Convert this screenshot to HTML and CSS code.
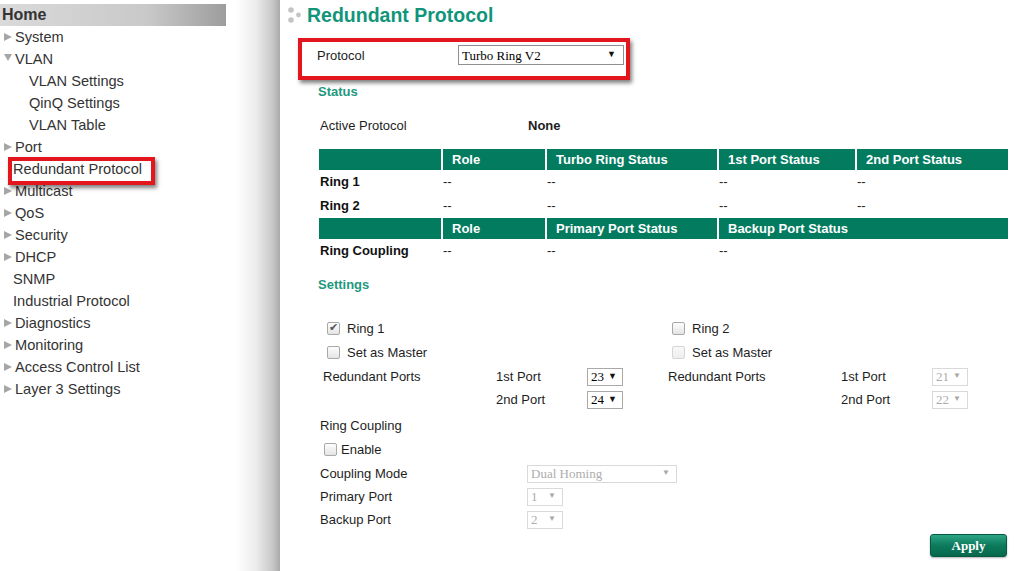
FILE: index.html
```html
<!doctype html>
<html>
<head>
	<meta charset="utf-8">
	<link rel="stylesheet" href="styles.css">
</head>
<body>

<div class="layout">
	<aside class="sidebar">
		<div class="home">Home</div>
		<ul class="menu">
			<li class="closed">System</li>
			<li class="open">VLAN</li>
			<li class="sub">VLAN Settings</li>
			<li class="sub">QinQ Settings</li>
			<li class="sub">VLAN Table</li>
			<li class="closed">Port</li>
			<li class="leaf marked">Redundant Protocol</li>
			<li class="closed">Multicast</li>
			<li class="closed">QoS</li>
			<li class="closed">Security</li>
			<li class="closed">DHCP</li>
			<li class="leaf">SNMP</li>
			<li class="leaf">Industrial Protocol</li>
			<li class="closed">Diagnostics</li>
			<li class="closed">Monitoring</li>
			<li class="closed">Access Control List</li>
			<li class="closed">Layer 3 Settings</li>
		</ul>
	</aside>

	<main class="content">
		<h1 class="page-title">
			<svg class="dots" width="14" height="16" viewBox="0 0 14 16">
				<circle cx="3" cy="3" r="2.8" fill="#c4c4c4"/>
				<circle cx="3" cy="13" r="2.8" fill="#c4c4c4"/>
				<circle cx="10.5" cy="8" r="2.4" fill="#c4c4c4"/>
			</svg>
			Redundant Protocol
		</h1>

		<div class="protocol-box">
			<label for="protocol">Protocol</label>
			<span class="select select-protocol">
				<select id="protocol"><option>Turbo Ring V2</option></select>
			</span>
		</div>

		<h2 class="section">Status</h2>
		<div class="active-row">
			<span>Active Protocol</span>
			<b>None</b>
		</div>

		<div class="status-grid">
			<div class="th"></div>
			<div class="th">Role</div>
			<div class="th">Turbo Ring Status</div>
			<div class="th">1st Port Status</div>
			<div class="th">2nd Port Status</div>

			<div class="td name">Ring 1</div>
			<div class="td">--</div>
			<div class="td">--</div>
			<div class="td">--</div>
			<div class="td">--</div>

			<div class="td name">Ring 2</div>
			<div class="td">--</div>
			<div class="td">--</div>
			<div class="td">--</div>
			<div class="td">--</div>

			<div class="th"></div>
			<div class="th">Role</div>
			<div class="th">Primary Port Status</div>
			<div class="th span2">Backup Port Status</div>

			<div class="td name">Ring Coupling</div>
			<div class="td">--</div>
			<div class="td">--</div>
			<div class="td span2">--</div>
		</div>

		<h2 class="section settings-title">Settings</h2>

		<div class="rings">
			<div class="ring">
				<label class="check wide-gap full"><input type="checkbox" checked> Ring 1</label>
				<label class="check wide-gap full"><input type="checkbox"> Set as Master</label>
				<span>Redundant Ports</span>
				<span>1st Port</span>
				<span class="select select-port"><select><option>23</option></select></span>
				<span></span>
				<span>2nd Port</span>
				<span class="select select-port"><select><option>24</option></select></span>
			</div>
			<div class="ring">
				<label class="check wide-gap full"><input type="checkbox"> Ring 2</label>
				<label class="check wide-gap full"><input type="checkbox" disabled> Set as Master</label>
				<span>Redundant Ports</span>
				<span>1st Port</span>
				<span class="select select-port off"><select disabled><option>21</option></select></span>
				<span></span>
				<span>2nd Port</span>
				<span class="select select-port off"><select disabled><option>22</option></select></span>
			</div>
		</div>

		<div class="coupling">
			<span class="full">Ring Coupling</span>
			<label class="check full enable"><input type="checkbox"> Enable</label>
			<span>Coupling Mode</span>
			<span class="select select-mode off"><select disabled><option>Dual Homing</option></select></span>
			<span>Primary Port</span>
			<span class="select select-port off"><select disabled><option>1</option></select></span>
			<span>Backup Port</span>
			<span class="select select-port off"><select disabled><option>2</option></select></span>
		</div>

		<div class="actions">
			<button id="apply" class="apply">Apply</button>
		</div>
	</main>
</div>

</body>
</html>
```

FILE: styles.css
```css
body {
    margin: 0;
    font-family: "Liberation Sans", Arial, sans-serif;
    font-size: 13px;
    color: #1e1e1e;
    background: #fff;
}

.layout {
    display: flex;
    min-height: 571px;
}

/* sidebar */

.sidebar {
    width: 280px;
    flex: none;
    background: linear-gradient(to right, #fff 236px, #ececec 256px, #c9c9c9 272px, #aaa 280px);
}

.home {
    margin-top: 4px;
    width: 224px;
    height: 22px;
    line-height: 22px;
    padding-left: 2px;
    font-size: 16px;
    font-weight: bold;
    color: #333;
    background: linear-gradient(to right, #dadada, #c9c9c9 65%, #9d9d9d);
}

.menu {
    list-style: none;
    margin: 0;
    padding: 0;
    font-size: 14.6px;
    color: #333;
}

.menu li {
    height: 22px;
    line-height: 22px;
    white-space: nowrap;
}

.menu .closed::before {
    content: "";
    display: inline-block;
    margin: 0 3px 0 4px;
    border-left: 8px solid #a6a6a6;
    border-top: 4px solid transparent;
    border-bottom: 4px solid transparent;
    vertical-align: 1px;
}

.menu .open::before {
    content: "";
    display: inline-block;
    margin: 0 3px 0 4px;
    border-top: 7px solid #a6a6a6;
    border-left: 4px solid transparent;
    border-right: 4px solid transparent;
    vertical-align: 3px;
}

.menu .sub {
    padding-left: 29px;
}

.menu .leaf {
    padding-left: 13px;
}

.menu .marked {
    position: relative;
}

.menu .marked::after {
    content: "";
    position: absolute;
    left: 8px;
    top: -1px;
    width: 139px;
    height: 20px;
    border: 4px solid #e2161c;
    box-shadow: 2px 3px 4px rgba(0, 0, 0, 0.5);
}

/* content */

.content {
    flex: 1;
    min-width: 0;
    padding: 0 18px 0 38px;
}

.page-title {
    display: flex;
    align-items: center;
    gap: 5px;
    margin: 4px 0 0 -30px;
    height: 22px;
    font-size: 19.5px;
    font-weight: bold;
    color: #11957a;
}

.protocol-box {
    display: flex;
    align-items: center;
    box-sizing: border-box;
    margin: 12px 0 0 -20px;
    width: 332px;
    height: 42px;
    padding: 5px 0 13px 15px;
    border: 4px solid #e2161c;
    box-shadow: 2px 3px 4px rgba(0, 0, 0, 0.5);
}

.protocol-box label {
    width: 141px;
}

.section {
    margin: 4px 0 0;
    line-height: 16px;
    font-size: 13px;
    font-weight: bold;
    color: #22987e;
}

.active-row {
    display: flex;
    margin: 18px 0 0 2px;
    line-height: 16px;
}

.active-row span {
    width: 208px;
}

.status-grid {
    display: grid;
    grid-template-columns: 122px 102px 170px 136px 1fr;
    column-gap: 2px;
    margin: 15px 0 0 1px;
}

.status-grid .th {
    height: 21px;
    line-height: 21px;
    padding-left: 9px;
    background: #037b5f;
    color: #fff;
    font-weight: bold;
}

.status-grid .td {
    height: 24px;
    line-height: 24px;
}

.status-grid .name {
    padding-left: 1px;
    font-weight: bold;
    color: #111;
}

.status-grid .span2 {
    grid-column: span 2;
}

.settings-title {
    margin-top: 14px;
}

/* settings */

.rings {
    display: flex;
    margin: 23px 0 0 5px;
}

.ring {
    display: grid;
    flex: none;
    width: 345px;
    grid-template-columns: 173px 91px auto;
    grid-template-rows: 24px 25px 23px 23px;
    align-items: center;
}

.ring + .ring {
    width: 330px;
}

.full {
    grid-column: 1 / -1;
}

.check {
    display: flex;
    align-items: center;
    gap: 4px;
}

.check.wide-gap {
    gap: 7px;
    padding-left: 4px;
}

.check.enable {
    padding-left: 4px;
}

.check input {
    appearance: none;
    -webkit-appearance: none;
    position: relative;
    margin: 0;
    width: 13px;
    height: 13px;
    border: 1px solid #a9a9a9;
    border-radius: 2px;
    background: linear-gradient(#fdfdfd, #e4e4e4);
}

.check input:checked::after {
    content: "\2714";
    position: absolute;
    left: 1px;
    top: -2px;
    font-size: 11px;
    color: #555;
}

.check input:disabled {
    border-color: #d6d6d6;
    background: linear-gradient(#f8f8f8, #eeeeee);
}

.coupling {
    display: grid;
    grid-template-columns: 207px auto;
    grid-template-rows: 24px 25px 23px 23px 23px;
    align-items: center;
    margin: 2px 0 0 2px;
}

/* selects */

.select {
    position: relative;
    display: inline-block;
    width: fit-content;
}

.select select {
    appearance: none;
    -webkit-appearance: none;
    display: block;
    box-sizing: border-box;
    margin: 0;
    padding: 0 0 0 3px;
    height: 18px;
    border: 1px solid #a9a9a9;
    border-radius: 0;
    background: #fff;
    font-family: "Liberation Serif", "Times New Roman", serif;
    font-size: 13px;
    color: #000;
}

.select::after {
    content: "\25BC";
    position: absolute;
    right: 6px;
    top: 3px;
    font-size: 9px;
    color: #111;
    pointer-events: none;
}

.select-protocol select {
    width: 166px;
    height: 20px;
    border-color: #8f8f8f;
}

.select-protocol::after {
    top: 4px;
    right: 8px;
}

.select-port select {
    width: 36px;
}

.select-mode select {
    width: 150px;
}

.select.off select {
    border-color: #c9c9c9;
    color: #8a8a8a;
}

.select.off::after {
    color: #a8a8a8;
    font-size: 8px;
    right: 7px;
}

/* button */

.actions {
    display: flex;
    justify-content: flex-end;
    margin-top: 3px;
    padding-right: 1px;
}

.apply {
    width: 77px;
    height: 23px;
    border: 1px solid #06593f;
    border-radius: 3px;
    background: linear-gradient(#2ca585, #0d7a5c 50%, #06684d);
    color: #fff;
    font-family: "Liberation Serif", "Times New Roman", serif;
    font-size: 13px;
    font-weight: bold;
    box-shadow: 0 1px 2px rgba(0, 0, 0, 0.3);
}
```
